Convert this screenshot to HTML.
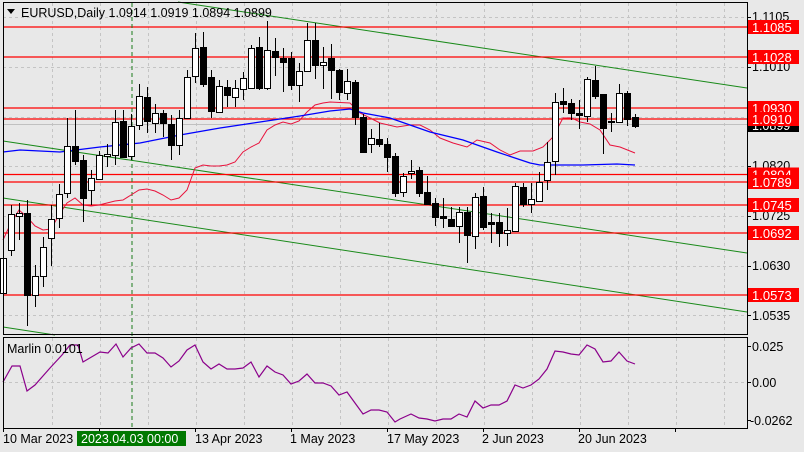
<!DOCTYPE html>
<html><head><meta charset="utf-8"><style>
html,body{margin:0;padding:0;background:#e8e8e8;}
svg{display:block;font-family:"Liberation Sans",sans-serif;}
</style></head><body>
<svg id="s" width="804" height="452" viewBox="0 0 804 452" xmlns="http://www.w3.org/2000/svg">
<rect x="0" y="0" width="804" height="452" fill="#e8e8e8"/>
<g id="grid" stroke="#c4c4c4" stroke-dasharray="3,3" stroke-width="1"></g>
<g id="trend" stroke="#1a8a1a" stroke-width="1" fill="none">
<line x1="178" y1="2" x2="747" y2="88"/>
<line x1="3" y1="141" x2="747" y2="253"/>
<line x1="3" y1="198" x2="747" y2="312"/>
<line x1="3" y1="327" x2="55" y2="335"/>
</g>
<g id="hl" stroke="#ff0000" stroke-width="1.3"></g>
<line x1="3" y1="124.5" x2="747" y2="124.5" stroke="#c0c0c0"/>
<line x1="132" y1="3" x2="132" y2="428" stroke="#1a7a1a" stroke-dasharray="4,3"/>
<polyline id="red" fill="none" stroke="#e8123c" stroke-width="1"/>
<polyline id="blue" fill="none" stroke="#0000ff" stroke-width="1.3"/>
<g id="cd"></g>
<polyline id="mag" fill="none" stroke="#8b008b" stroke-width="1.2"/>
<rect x="3.5" y="2.5" width="744" height="332" fill="none" stroke="#000"/>
<rect x="3.5" y="337.5" width="744" height="91" fill="none" stroke="#000"/>
<g id="ticks" stroke="#000"></g>
<polygon points="7,9 15,9 11,14" fill="#000"/>
<text x="21" y="17" font-size="12.5" fill="#000">EURUSD,Daily  1.0914 1.0919 1.0894 1.0899</text>
<text x="7" y="353" font-size="12.5" fill="#000">Marlin 0.0101</text>
<g font-size="12.5" fill="#000">
<text x="752" y="21">1.1105</text>
<text x="752" y="71">1.1010</text>
<text x="752" y="170">1.0820</text>
<text x="752" y="220">1.0725</text>
<text x="752" y="270">1.0630</text>
<text x="752" y="320">1.0535</text>
<text x="752" y="351">0.025</text>
<text x="752" y="387">0.00</text>
<text x="750" y="425">-0.0262</text>
</g>
<rect x="748" y="120" width="51" height="12" fill="#000"/>
<text x="752" y="130" font-size="12.5" fill="#fff">1.0899</text>
<g id="lbl" font-size="13" fill="#fff"></g>
<g font-size="12.5" fill="#000">
<text x="3" y="443">10 Mar 2023</text>
<rect x="77" y="431" width="109" height="15" fill="#007800"/>
<text x="81" y="443" fill="#fff">2023.04.03 00:00</text>
<text x="195" y="443">13 Apr 2023</text>
<text x="290" y="443">1 May 2023</text>
<text x="387" y="443">17 May 2023</text>
<text x="482" y="443">2 Jun 2023</text>
<text x="578" y="443">20 Jun 2023</text>
</g>
</svg>
<script>
var NS="http://www.w3.org/2000/svg";
function el(p,t,a){var e=document.createElementNS(NS,t);for(var k in a)e.setAttribute(k,a[k]);document.getElementById(p).appendChild(e);return e;}
for(var x=52;x<747;x+=48){el("grid","line",{x1:x+.5,y1:3,x2:x+.5,y2:334});el("grid","line",{x1:x+.5,y1:338,x2:x+.5,y2:428});}
[17,67,117,166,216,266,315].forEach(function(y){el("grid","line",{x1:3,y1:y+.5,x2:747,y2:y+.5});});
el("grid","line",{x1:3,y1:382.5,x2:747,y2:382.5});
var reds=[[27,"1.1085"],[57,"1.1028"],[108,"1.0930"],[119,"1.0910"],[174.5,"1.0804"],[182,"1.0789"],[205,"1.0745"],[233,"1.0692"],[295,"1.0573"]];
reds.forEach(function(r){el("hl","line",{x1:3,y1:r[0],x2:747,y2:r[0]});
 el("lbl","rect",{x:748,y:r[0]-7,width:51,height:14,fill:"#ff0000"});
 var t=el("lbl","text",{x:752,y:r[0]+5});t.textContent=r[1];});
[17,67,117,166,216,266,315,346,382,420].forEach(function(y){el("ticks","line",{x1:747,y1:y+.5,x2:751,y2:y+.5});});
for(var x=3;x<747;x+=96){el("ticks","line",{x1:x+.5,y1:428,x2:x+.5,y2:432});}
var C=[[3,258,293,230,293,1],[11,214,250,205,256,1],[19,213,216,203,240,1],[27,213,295,200,326,0],[35,276,295,265,307,1],[43,247,276,237,287,1],[51,219,238,205,266,1],[59,194,218,184,228,1],[67,146,193,118,198,1],[75,146,161,110,165,0],[83,160,198,155,222,0],[91,178,190,170,205,1],[99,155,179,151,180,1],[107,154,156,144,167,1],[115,122,155,110,165,1],[123,121,157,110,158,0],[131,126,156,114,160,1],[139,96,125,84,130,1],[147,97,121,87,133,0],[155,113,123,104,133,1],[163,113,123,110,137,0],[171,124,145,115,160,0],[179,118,145,110,155,1],[187,77,118,70,118,1],[195,48,76,33,83,1],[203,47,84,32,87,0],[211,77,111,70,118,0],[219,86,112,80,112,1],[227,87,95,80,107,0],[235,88,97,80,107,1],[243,78,89,72,100,1],[251,48,88,45,88,1],[259,47,88,37,90,0],[267,50,88,21,90,1],[275,51,57,38,76,0],[283,58,62,48,92,0],[291,58,85,52,90,0],[299,71,85,63,102,1],[307,40,71,23,72,1],[315,40,65,23,79,0],[323,62,65,47,89,1],[331,58,70,44,99,0],[339,70,92,69,100,0],[347,81,93,69,100,1],[355,82,117,80,125,0],[363,117,152,114,153,0],[371,138,144,129,153,1],[379,139,144,123,147,0],[387,144,157,138,172,0],[395,156,193,153,197,0],[403,176,192,173,197,1],[411,171,173,160,179,1],[419,170,193,167,197,0],[427,192,204,176,205,0],[435,203,217,198,226,0],[443,216,218,198,228,0],[451,219,226,207,227,0],[459,212,226,207,243,1],[467,212,235,207,263,0],[475,197,236,193,249,1],[483,196,227,187,230,0],[491,222,224,213,243,0],[499,222,233,213,247,0],[507,230,233,208,246,1],[515,186,231,183,232,1],[523,187,204,183,207,0],[531,199,204,183,213,1],[539,182,201,172,202,1],[547,162,180,142,190,1],[555,102,161,93,175,1],[563,101,104,88,113,0],[571,103,113,99,120,0],[579,113,115,100,129,0],[587,79,116,77,122,1],[595,80,96,66,99,0],[603,94,128,94,154,0],[611,121,122,113,132,0],[619,93,122,84,123,1],[627,93,119,91,126,0],[635,117,126,114,128,0]];
C.forEach(function(c){var x=c[0]+.5;
 el("cd","line",{x1:x,y1:c[3],x2:x,y2:c[4],stroke:"#000"});
 var h=Math.max(1,c[2]-c[1]);
 el("cd","rect",{x:c[0]-2.5,y:c[1]+.5,width:6,height:h,fill:c[5]?"#fff":"#000",stroke:"#000"});});
document.getElementById("red").setAttribute("points","3,240 10,225 19,210 27,217 35,226 43,230 51,229 59,215 67,203 75,198 83,205 91,206 99,205 107,203 115,201 123,200 131,195 139,190 147,189 155,191 163,195 171,200 179,198 187,190 195,168 203,165 211,166 219,166 227,165 235,162 243,152 251,147 259,143 267,130 275,125 283,122 291,124 299,121 307,112 315,105 323,103 330,102 350,103 360,113 370,118 380,123 397,127 410,125 420,125 430,130 440,138 453,143 467,147 477,140 490,143 500,150 510,155 520,151 533,151 543,147 553,137 563,118 572,118 580,122 590,124 600,130 610,145 620,147 635,153");
document.getElementById("blue").setAttribute("points","3,152 20,150 60,152 100,147 140,143 180,135 220,128 260,122 300,116 330,111 350,109 363,113 390,118 430,132 463,140 497,152 530,163 540,165 583,165 617,164 635,165");
document.getElementById("mag").setAttribute("points","3,382 12,366 20,366 27,391 35,385 50,368 62,355 70,345 78,345 83,362 100,352 108,353 116,344 123,357 131,348 139,344 147,353 155,353 163,358 171,367 179,361 187,350 195,345 203,362 211,369 219,364 227,369 235,369 243,368 251,362 259,377 267,366 275,372 283,375 291,384 299,381 307,374 315,383 323,383 331,386 339,395 347,392 355,403 363,414 371,410 379,410 387,412 395,422 400,419 411,414 419,418 427,419 435,421 443,419 451,419 459,414 467,417 475,401 483,408 491,405 499,405 507,401 515,385 523,388 531,385 539,379 547,369 555,351 563,352 571,354 579,355 587,345 595,349 603,362 611,361 619,352 627,361 635,364");
</script>
</body></html>
